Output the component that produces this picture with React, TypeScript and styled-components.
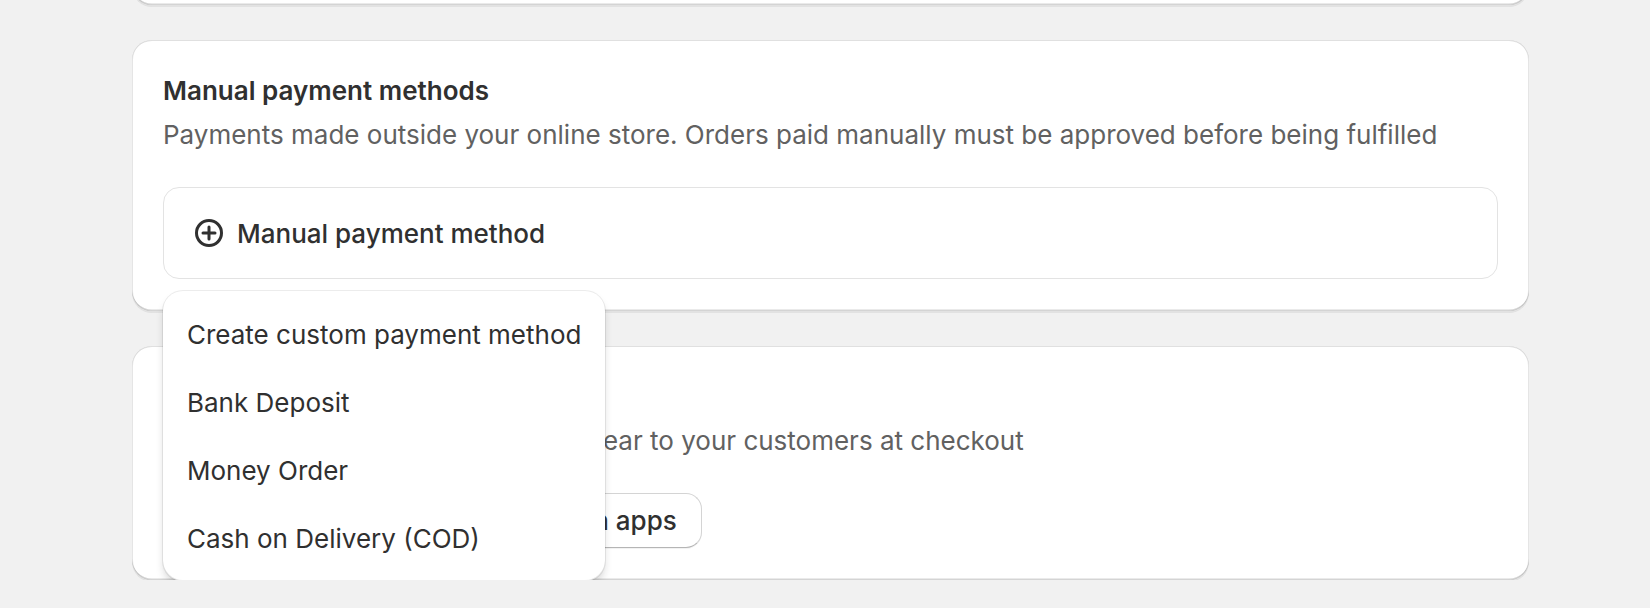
import React from "react";
import { styled, createGlobalStyle } from "styled-components";

const GlobalStyle = createGlobalStyle`
  body {
    margin: 0;
    background: #f1f1f1;
    font-family: Inter, "Noto Sans", sans-serif;
    color: #303030;
    overflow: hidden;
  }
`;

const Page = styled.div`
  display: flex;
  flex-direction: column;
  gap: 35px;
  margin-top: -62px;
  padding: 0 121px 0 132px;
`;

const Card = styled.section<{ $height?: number }>`
  background: #ffffff;
  border-radius: 20px;
  padding: 31px 31px 32px;
  ${(p) => (p.$height ? `height: ${p.$height}px; box-sizing: border-box;` : "")}
  box-shadow:
    0 2px 0 0 rgba(26, 26, 26, 0.07),
    inset 0 1px 0 0 rgba(204, 204, 204, 0.6),
    inset 0 -1.5px 0 0 rgba(0, 0, 0, 0.17),
    inset 1px 0 0 0 rgba(0, 0, 0, 0.1),
    inset -1px 0 0 0 rgba(0, 0, 0, 0.1);
`;

const Title = styled.h2`
  margin: 0;
  font-size: 26px;
  line-height: 40px;
  font-weight: 600;
  color: #303030;
`;

const Description = styled.p`
  margin: 4px 0 0;
  font-size: 26px;
  line-height: 40px;
  color: #616161;
`;

const AddArea = styled.div`
  position: relative;
  margin-top: 32px;
`;

const AddButton = styled.button`
  display: flex;
  align-items: center;
  gap: 8px;
  width: 100%;
  height: 92px;
  box-sizing: border-box;
  padding: 0 25px;
  background: #ffffff;
  border: 1px solid #e3e3e3;
  border-radius: 16px;
  font-family: inherit;
  font-size: 26px;
  font-weight: 450;
  color: #303030;
  cursor: pointer;
`;

const Menu = styled.ul`
  position: absolute;
  top: calc(100% + 12px);
  left: 0;
  z-index: 10;
  width: max-content;
  margin: 0;
  padding: 10px 0 8px;
  list-style: none;
  background: #ffffff;
  border-radius: 20px;
  box-shadow:
    0 0 0 1px rgba(0, 0, 0, 0.07),
    0 6px 10px -2px rgba(26, 26, 26, 0.22),
    inset 0 -1px 0 0 rgba(0, 0, 0, 0.1);
`;

const MenuItem = styled.li`
  padding: 14px 24px;
  font-size: 26px;
  line-height: 40px;
  color: #303030;
  cursor: pointer;
`;

const SecondaryButton = styled.button`
  margin-top: 32px;
  height: 55px;
  padding: 0 24px 0 25px;
  background: #ffffff;
  border: 1px solid #d4d4d4;
  border-bottom-color: #b5b5b5;
  border-radius: 16px;
  font-family: inherit;
  font-size: 26px;
  font-weight: 450;
  color: #303030;
  box-shadow: 0 1px 0 rgba(0, 0, 0, 0.05);
`;

const PlusCircle = () => (
  <svg width="40" height="40" viewBox="0 0 20 20" fill="none">
    <circle cx="10" cy="10" r="6.25" stroke="#303030" strokeWidth="1.5" />
    <path d="M10 7v6M7 10h6" stroke="#303030" strokeWidth="1.5" strokeLinecap="round" />
  </svg>
);

const menuItems = [
  "Create custom payment method",
  "Bank Deposit",
  "Money Order",
  "Cash on Delivery (COD)",
];

export default function App() {
  return (
    <>
      <GlobalStyle />
      <Page>
        <Card $height={67} />
        <Card>
          <Title>Manual payment methods</Title>
          <Description>
            Payments made outside your online store. Orders paid manually must be approved before being fulfilled
          </Description>
          <AddArea>
            <AddButton>
              <PlusCircle />
              Manual payment method
            </AddButton>
            <Menu>
              {menuItems.map((item) => (
                <MenuItem key={item}>{item}</MenuItem>
              ))}
            </Menu>
          </AddArea>
        </Card>
        <Card>
          <Title>Supported payment methods</Title>
          <Description>Payment methods via apps that appear to your customers at checkout</Description>
          <SecondaryButton>Explore more payment integration apps</SecondaryButton>
        </Card>
      </Page>
    </>
  );
}
